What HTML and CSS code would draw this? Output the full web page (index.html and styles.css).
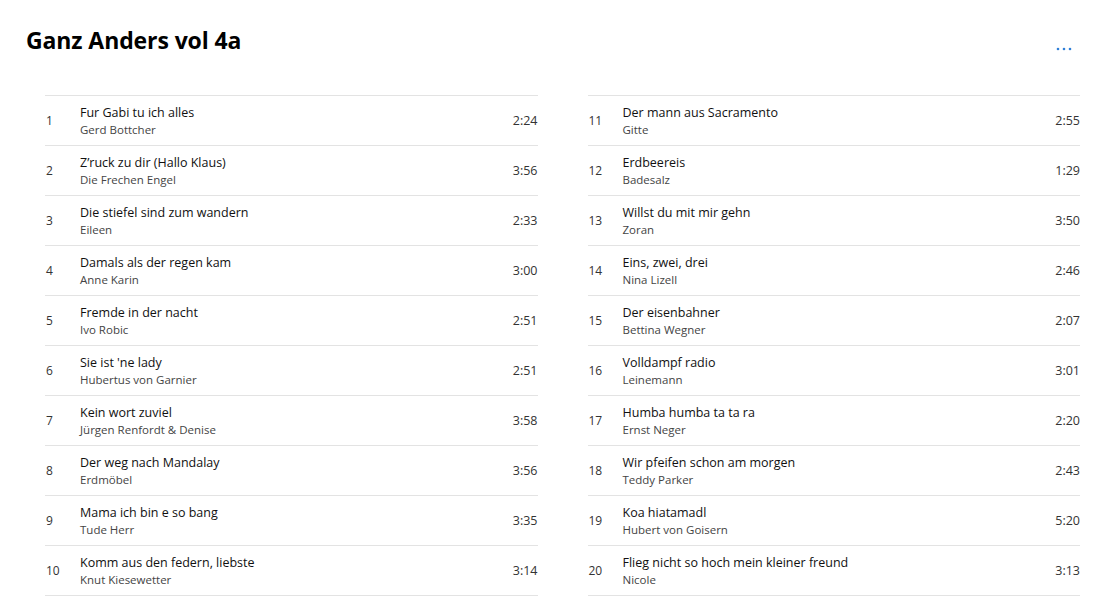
FILE: index.html
```html
<!DOCTYPE html>
<html lang="de">
<head>
<meta charset="utf-8">
<title>Ganz Anders vol 4a</title>
<link rel="stylesheet" href="styles.css">
</head>
<body>
<div class="page">
  <header class="header">
    <h1 class="title">Ganz Anders vol 4a</h1>
    <button class="more" aria-label="Mehr">
      <svg width="16" height="4" viewBox="0 0 16 4"><circle cx="2" cy="2" r="1.3"/><circle cx="8" cy="2" r="1.3"/><circle cx="14" cy="2" r="1.3"/></svg>
    </button>
  </header>
  <main class="tracks">
    <ol class="col">
      <li class="row"><span class="num">1</span><div class="info"><div class="name">Fur Gabi tu ich alles</div><div class="artist">Gerd Bottcher</div></div><span class="dur">2:24</span></li>
      <li class="row"><span class="num">2</span><div class="info"><div class="name">Z’ruck zu dir (Hallo Klaus)</div><div class="artist">Die Frechen Engel</div></div><span class="dur">3:56</span></li>
      <li class="row"><span class="num">3</span><div class="info"><div class="name">Die stiefel sind zum wandern</div><div class="artist">Eileen</div></div><span class="dur">2:33</span></li>
      <li class="row"><span class="num">4</span><div class="info"><div class="name">Damals als der regen kam</div><div class="artist">Anne Karin</div></div><span class="dur">3:00</span></li>
      <li class="row"><span class="num">5</span><div class="info"><div class="name">Fremde in der nacht</div><div class="artist">Ivo Robic</div></div><span class="dur">2:51</span></li>
      <li class="row"><span class="num">6</span><div class="info"><div class="name">Sie ist 'ne lady</div><div class="artist">Hubertus von Garnier</div></div><span class="dur">2:51</span></li>
      <li class="row"><span class="num">7</span><div class="info"><div class="name">Kein wort zuviel</div><div class="artist">Jürgen Renfordt &amp; Denise</div></div><span class="dur">3:58</span></li>
      <li class="row"><span class="num">8</span><div class="info"><div class="name">Der weg nach Mandalay</div><div class="artist">Erdmöbel</div></div><span class="dur">3:56</span></li>
      <li class="row"><span class="num">9</span><div class="info"><div class="name">Mama ich bin e so bang</div><div class="artist">Tude Herr</div></div><span class="dur">3:35</span></li>
      <li class="row"><span class="num">10</span><div class="info"><div class="name">Komm aus den federn, liebste</div><div class="artist">Knut Kiesewetter</div></div><span class="dur">3:14</span></li>
    </ol>
    <ol class="col">
      <li class="row"><span class="num">11</span><div class="info"><div class="name">Der mann aus Sacramento</div><div class="artist">Gitte</div></div><span class="dur">2:55</span></li>
      <li class="row"><span class="num">12</span><div class="info"><div class="name">Erdbeereis</div><div class="artist">Badesalz</div></div><span class="dur">1:29</span></li>
      <li class="row"><span class="num">13</span><div class="info"><div class="name">Willst du mit mir gehn</div><div class="artist">Zoran</div></div><span class="dur">3:50</span></li>
      <li class="row"><span class="num">14</span><div class="info"><div class="name">Eins, zwei, drei</div><div class="artist">Nina Lizell</div></div><span class="dur">2:46</span></li>
      <li class="row"><span class="num">15</span><div class="info"><div class="name">Der eisenbahner</div><div class="artist">Bettina Wegner</div></div><span class="dur">2:07</span></li>
      <li class="row"><span class="num">16</span><div class="info"><div class="name">Volldampf radio</div><div class="artist">Leinemann</div></div><span class="dur">3:01</span></li>
      <li class="row"><span class="num">17</span><div class="info"><div class="name">Humba humba ta ta ra</div><div class="artist">Ernst Neger</div></div><span class="dur">2:20</span></li>
      <li class="row"><span class="num">18</span><div class="info"><div class="name">Wir pfeifen schon am morgen</div><div class="artist">Teddy Parker</div></div><span class="dur">2:43</span></li>
      <li class="row"><span class="num">19</span><div class="info"><div class="name">Koa hiatamadl</div><div class="artist">Hubert von Goisern</div></div><span class="dur">5:20</span></li>
      <li class="row"><span class="num">20</span><div class="info"><div class="name">Flieg nicht so hoch mein kleiner freund</div><div class="artist">Nicole</div></div><span class="dur">3:13</span></li>
    </ol>
  </main>
</div>
</body>
</html>
```
FILE: styles.css
```css
* { box-sizing: border-box; }
html, body { margin: 0; padding: 0; background: #fff; }
body {
  font-family: "Open Sans", "Noto Sans", "Liberation Sans", sans-serif;
  color: #000;
}
.page { width: 1115px; }
.header {
  display: flex;
  justify-content: space-between;
  align-items: flex-start;
  padding: 25px 43px 0 26px;
  height: 78px;
}
.title {
  margin: 0;
  font-size: 23px;
  line-height: 30px;
  font-weight: 700;
  letter-spacing: -0.1px;
}
.more {
  border: 0;
  background: none;
  padding: 0;
  margin-top: 22px;
  width: 16px;
  height: 4px;
  display: flex;
}
.more svg { fill: #2f7fd8; }
.tracks {
  display: grid;
  grid-template-columns: 1fr 1fr;
  column-gap: 50px;
  margin: 17px 35px 0 45px;
}
.col {
  list-style: none;
  margin: 0;
  padding: 0;
  border-top: 1px solid #e3e3e3;
}
.row {
  display: grid;
  grid-template-columns: 35px 1fr auto;
  align-items: center;
  height: 50px;
  border-bottom: 1px solid #e3e3e3;
}
.num { font-size: 12px; color: #333; padding-left: 1px; }
.info { display: flex; flex-direction: column; padding-top: 1px; }
.name { font-size: 12.5px; line-height: 17px; color: #111; }
.artist { font-size: 11.5px; line-height: 17px; color: #444; }
.dur { font-size: 12.5px; color: #333; }
```
